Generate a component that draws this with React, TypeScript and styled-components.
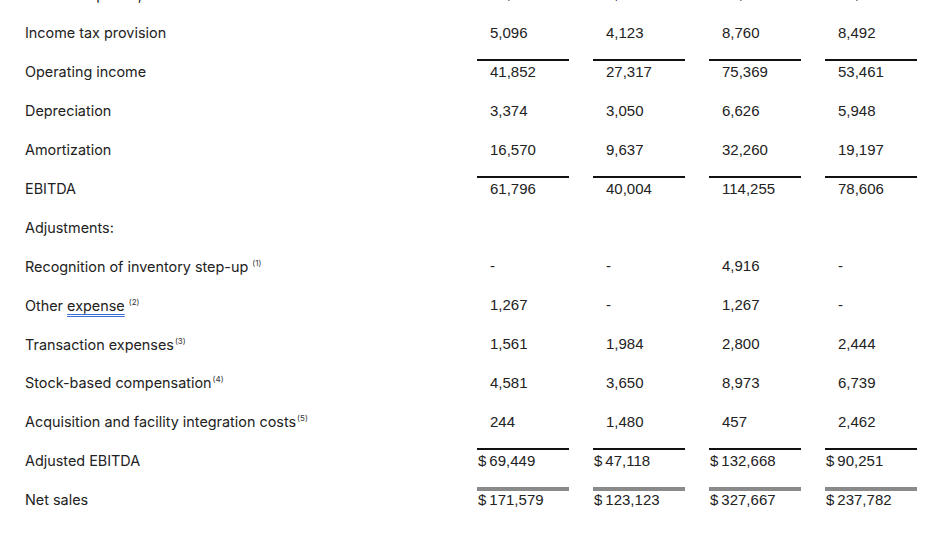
import React from "react";
import styled, { createGlobalStyle } from "styled-components";

const Global = createGlobalStyle`
  html, body { margin: 0; padding: 0; background: #fff; overflow: hidden; }
  body { width: 950px; height: 533px; }
`;

type Rule = "none" | "single" | "double";

interface RowData {
  label: string;
  squiggle?: string;
  note?: string;
  tight?: boolean;
  vals: string[];
  rule?: Rule;
  dollar?: boolean;
}

const rows: RowData[] = [
  { label: "Interest expense, net", vals: ["21,340", "8,126", "41,780", "31,240"] },
  { label: "Income tax provision", vals: ["5,096", "4,123", "8,760", "8,492"] },
  { label: "Operating income", vals: ["41,852", "27,317", "75,369", "53,461"], rule: "single" },
  { label: "Depreciation", vals: ["3,374", "3,050", "6,626", "5,948"] },
  { label: "Amortization", vals: ["16,570", "9,637", "32,260", "19,197"] },
  { label: "EBITDA", vals: ["61,796", "40,004", "114,255", "78,606"], rule: "single" },
  { label: "Adjustments:", vals: ["", "", "", ""] },
  { label: "Recognition of inventory step-up", note: "(1)", vals: ["-", "-", "4,916", "-"] },
  { label: "Other", squiggle: "expense", note: "(2)", vals: ["1,267", "-", "1,267", "-"] },
  { label: "Transaction expenses", note: "(3)", tight: true, vals: ["1,561", "1,984", "2,800", "2,444"] },
  { label: "Stock-based compensation", note: "(4)", tight: true, vals: ["4,581", "3,650", "8,973", "6,739"] },
  { label: "Acquisition and facility integration costs", note: "(5)", tight: true, vals: ["244", "1,480", "457", "2,462"] },
  { label: "Adjusted EBITDA", vals: ["69,449", "47,118", "132,668", "90,251"], rule: "single", dollar: true },
  { label: "Net sales", vals: ["171,579", "123,123", "327,667", "237,782"], rule: "double", dollar: true },
  { label: "Adjusted EBITDA margin", vals: ["40.5 %", "38.3 %", "40.5 %", "38.0 %"] },
];

const Table = styled.div`
  display: flex;
  flex-direction: column;
  margin-top: -25.4px;
`;

const Row = styled.div`
  display: grid;
  grid-template-columns: 453px repeat(4, 92px);
  column-gap: 24px;
  height: 38.9px;
`;

const Label = styled.div`
  align-self: center;
  padding-left: 25px;
  font-family: Inter, "Liberation Sans", sans-serif;
  font-size: 14.4px;
  color: #222;
  white-space: nowrap;
`;

const Squiggle = styled.span`
  text-decoration-line: underline;
  text-decoration-style: double;
  text-decoration-color: #3b6fd6;
  text-decoration-thickness: 1px;
  text-underline-offset: 3px;
`;

const Note = styled.sup<{ $tight?: boolean }>`
  font-size: 8px;
  vertical-align: 6px;
  line-height: 0;
  margin-left: ${(p) => (p.$tight ? "1px" : "4px")};
  color: #333;
`;

const Cell = styled.div<{ $rule: Rule; $dollar?: boolean }>`
  align-self: start;
  margin-top: 6.5px;
  border-top: ${(p) =>
    p.$rule === "single"
      ? "2.5px solid #111"
      : p.$rule === "double"
      ? "4.5px solid #8a8a8a"
      : "2.5px solid transparent"};
  line-height: ${(p) => (p.$rule === "double" ? "18px" : "22px")};
  padding-left: ${(p) => (p.$dollar ? "1px" : "13px")};
  font-family: "Liberation Sans", Arial, sans-serif;
  font-size: 15px;
  color: #222;
  white-space: nowrap;
`;

const Currency = styled.span`
  margin-right: 3px;
`;

export default function App() {
  return (
    <>
      <Global />
      <Table>
        {rows.map((r, i) => (
          <Row key={i}>
            <Label>
              {r.label}
              {r.squiggle ? (
                <>
                  {" "}
                  <Squiggle>{r.squiggle}</Squiggle>
                </>
              ) : null}
              {r.note ? <Note $tight={r.tight}>{r.note}</Note> : null}
            </Label>
            {r.vals.map((v, j) => (
              <Cell key={j} $rule={r.rule ?? "none"} $dollar={r.dollar}>
                {r.dollar ? <Currency>$</Currency> : null}
                {v}
              </Cell>
            ))}
          </Row>
        ))}
      </Table>
    </>
  );
}
